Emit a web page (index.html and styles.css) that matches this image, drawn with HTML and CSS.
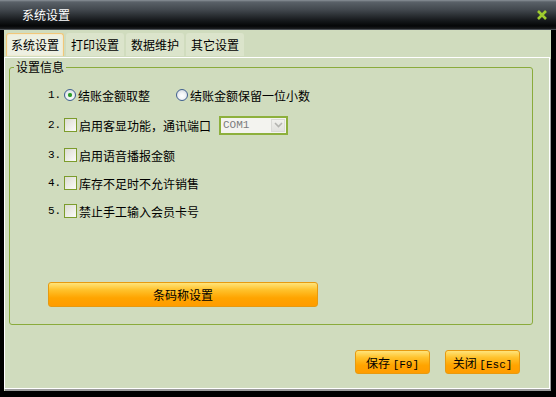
FILE: index.html
```html
<!DOCTYPE html>
<html lang="zh-CN">
<head>
  <meta charset="UTF-8">
  <link rel="stylesheet" href="styles.css">
  <title>系统设置</title>
</head>
<body>

  <div id="window">
    <div class="titlebar">
      <span class="title">系统设置</span>
      <svg class="close" width="10" height="10" viewBox="0 0 10 10">
        <path d="M1 1 L9 9 M9 1 L1 9" stroke="#9fcc2e" stroke-width="2.6" fill="none"/>
      </svg>
    </div>

    <div class="frame">
      <div class="tabs">
        <div class="tab active">系统设置</div>
        <div class="tab">打印设置</div>
        <div class="tab">数据维护</div>
        <div class="tab">其它设置</div>
      </div>

      <div class="panel">
        <fieldset class="group">
          <legend>设置信息</legend>
          <div class="opts">
            <div class="item">
              <span class="num">1.</span>
              <span class="radio checked"></span>
              <span class="label">结账金额取整</span>
              <span class="radio second"></span>
              <span class="label">结账金额保留一位小数</span>
            </div>
            <div class="item tall">
              <span class="num">2.</span>
              <span class="check"></span>
              <span class="label">启用客显功能，通讯端口</span>
              <div class="select">
                <span class="select-text">COM1</span>
                <span class="select-btn">
                  <svg width="9" height="6" viewBox="0 0 9 6">
                    <path d="M1 1 L4.5 4.5 L8 1" stroke="#b4b4b0" stroke-width="1.6" fill="none"/>
                  </svg>
                </span>
              </div>
            </div>
            <div class="item">
              <span class="num">3.</span>
              <span class="check"></span>
              <span class="label">启用语音播报金额</span>
            </div>
            <div class="item">
              <span class="num">4.</span>
              <span class="check"></span>
              <span class="label">库存不足时不允许销售</span>
            </div>
            <div class="item">
              <span class="num">5.</span>
              <span class="check"></span>
              <span class="label">禁止手工输入会员卡号</span>
            </div>

            <button class="orange wide">条码称设置</button>
          </div>
        </fieldset>

        <div class="footer">
          <button class="orange small">保存 <span class="key">[F9]</span></button>
          <button class="orange small">关闭 <span class="key">[Esc]</span></button>
        </div>
      </div>
    </div>
  </div>

</body>
</html>
```

FILE: styles.css
```css
body {
  margin: 0;
  padding: 0;
  background-color: #000;
  font-family: "Noto Sans CJK SC", "Noto Sans", sans-serif;
  font-size: 12px;
  color: #000;
}

#window {
  width: 556px;
  height: 397px;
  display: flex;
  flex-direction: column;
  background-color: #000;
}

.titlebar {
  height: 29px;
  display: flex;
  align-items: center;
  padding-left: 22px;
  padding-right: 9px;
  background: linear-gradient(#8a9198 0, #5a6168 2px, #41474d 10px, #181b1e 20px, #050607 26px, #1c1e20 29px);
  border-bottom: 1px solid #4a4f55;
}

.title {
  color: #fff;
  font-size: 12px;
  flex: 1;
  line-height: 14px;
}

.close {
  display: block;
}

.frame {
  flex: 1;
  margin: 0 5px 6px 4px;
  background-color: #d0dcbe;
  display: flex;
  flex-direction: column;
}

.tabs {
  display: flex;
  gap: 2px;
  padding: 3px 0 0 2px;
  height: 24px;
}

.tab {
  width: 58px;
  height: 23px;
  box-sizing: border-box;
  text-align: center;
  line-height: 23px;
  background-color: #dbe4cb;
  border-radius: 3px 3px 0 0;
}

.tab.active {
  background-color: #edf0e2;
  border: 1px solid #f1c77a;
  border-bottom: none;
  line-height: 22px;
  box-shadow: inset 0 0 2px #f7dca6;
}

.panel {
  flex: 1;
  border: 1px solid #fff;
  box-shadow: 1px 2px 0 #9c9c9c;
  margin-bottom: 2px;
  margin-right: 1px;
}

.group {
  margin: 2px 16px 0 4px;
  padding: 0;
  border: 1px solid #8aab3c;
  border-radius: 3px;
}

.group legend {
  padding: 0 2px;
  margin-left: 4px;
  line-height: 14px;
}

.opts {
  height: 250px;
  box-sizing: border-box;
  padding: 10px 0 17px 38px;
  display: flex;
  flex-direction: column;
  gap: 6px;
}

.item {
  display: flex;
  align-items: center;
  height: 22px;
}

.item.tall {
  height: 26px;
}

.num {
  width: 16px;
  font-family: "Liberation Mono", monospace;
  font-size: 11px;
}

.radio {
  width: 12px;
  height: 12px;
  box-sizing: border-box;
  border-radius: 50%;
  border: 1px solid #3f5f8f;
  background: radial-gradient(circle at 50% 60%, #ffffff 0, #f2f4f6 40%, #c9d0da 100%);
  margin-right: 2px;
  display: flex;
  align-items: center;
  justify-content: center;
}

.radio.checked::after {
  content: "";
  width: 4px;
  height: 4px;
  border-radius: 50%;
  background-color: #2a9a2a;
  box-shadow: 0 0 1px #6c6;
}

.radio.second {
  margin-left: 26px;
}

.check {
  width: 13px;
  height: 14px;
  box-sizing: border-box;
  border: 1px solid #7c9c2c;
  background: linear-gradient(135deg, #dcdcd2, #fbfbf8);
  margin-right: 2px;
}

.select {
  margin-left: 8px;
  width: 69px;
  height: 19px;
  box-sizing: border-box;
  border: 2px solid #8db03c;
  background-color: #f3f3ef;
  display: flex;
  align-items: center;
  justify-content: space-between;
  padding: 0 1px 0 2px;
}

.select-text {
  font-family: "Liberation Mono", monospace;
  font-size: 11px;
  color: #7c7c7c;
}

.select-btn {
  width: 14px;
  height: 13px;
  box-sizing: border-box;
  border: 1px solid #dadad6;
  background: linear-gradient(#f0f0ec, #e2e2de);
  display: flex;
  align-items: center;
  justify-content: center;
}

.select-btn svg {
  display: block;
}

button.orange {
  font-family: "Noto Sans CJK SC", "Noto Sans", sans-serif;
  font-size: 12px;
  color: #000;
  padding: 0;
  border: 1px solid #e79a10;
  border-radius: 3px;
  background: linear-gradient(#ffe47a 0, #ffc22c 30%, #ffa400 65%, #ff9c00 100%);
  cursor: pointer;
}

.wide {
  margin-top: auto;
  width: 270px;
  height: 25px;
  align-self: flex-start;
  margin-left: 0;
}

.footer {
  display: flex;
  justify-content: flex-end;
  gap: 15px;
  margin-top: 25px;
  padding-right: 29px;
}

.small {
  width: 75px;
  height: 24px;
}

.key {
  font-family: "Liberation Mono", monospace;
  font-size: 11px;
}
```
